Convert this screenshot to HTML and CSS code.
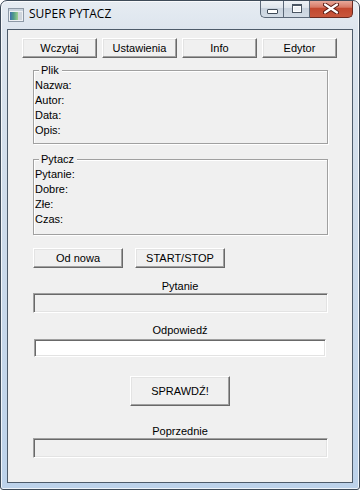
FILE: index.html
```html
<!DOCTYPE html>
<html lang="pl">
<head>
<meta charset="utf-8">
<title>SUPER PYTACZ</title>
<link rel="stylesheet" href="styles.css">
</head>
<body>
<div class="window">
  <div class="titlebar">
    <svg class="app-icon" viewBox="0 0 16 14" width="16" height="14">
      <defs>
        <linearGradient id="pane" x1="0" y1="0" x2="1" y2="0">
          <stop offset="0" stop-color="#3f6fae"/>
          <stop offset="0.45" stop-color="#4f9c8a"/>
          <stop offset="1" stop-color="#9fd08e"/>
        </linearGradient>
      </defs>
      <rect x="0.5" y="0.5" width="15" height="13" fill="#eef1f4" stroke="#8d99a6"/>
      <rect x="1" y="1" width="14" height="2" fill="#c9d3dd"/>
      <rect x="2" y="4" width="8" height="8" fill="url(#pane)"/>
      <rect x="10" y="4" width="4" height="8" fill="#cfd6dd"/>
    </svg>
    <span class="title">SUPER PYTACZ</span>
    <div class="controls">
      <div class="ctl min"><span class="min-glyph"></span></div>
      <div class="ctl max"><span class="max-glyph"></span></div>
      <div class="ctl close">
        <svg viewBox="0 0 16 11" width="16" height="11">
          <path d="M2 1.5 L14 9.5 M14 1.5 L2 9.5" stroke="#5a1c14" stroke-width="4.2" stroke-linecap="round"/>
          <path d="M2 1.5 L14 9.5 M14 1.5 L2 9.5" stroke="#ffffff" stroke-width="2.2" stroke-linecap="round"/>
        </svg>
      </div>
    </div>
  </div>
  <div class="client">
    <div class="toolbar">
      <button class="btn tb-btn">Wczytaj</button>
      <button class="btn tb-btn">Ustawienia</button>
      <button class="btn tb-btn">Info</button>
      <button class="btn tb-btn">Edytor</button>
    </div>

    <div class="group group-plik">
      <span class="legend">Plik</span>
      <div class="field">Nazwa:</div>
      <div class="field">Autor:</div>
      <div class="field">Data:</div>
      <div class="field">Opis:</div>
    </div>

    <div class="group group-pytacz">
      <span class="legend">Pytacz</span>
      <div class="field">Pytanie:</div>
      <div class="field">Dobre:</div>
      <div class="field">Złe:</div>
      <div class="field">Czas:</div>
    </div>

    <div class="actions">
      <button class="btn act-btn">Od nowa</button>
      <button class="btn act-btn">START/STOP</button>
    </div>

    <div class="caption cap-pytanie">Pytanie</div>
    <div class="textbox tb-readonly"></div>

    <div class="caption cap-odp">Odpowiedź</div>
    <div class="textbox tb-input"></div>

    <button class="btn check-btn">SPRAWDŹ!</button>

    <div class="caption cap-prev">Poprzednie</div>
    <div class="textbox tb-readonly"></div>
  </div>
</div>
</body>
</html>
```

FILE: styles.css
```css
* { box-sizing: border-box; }

html, body {
  margin: 0;
  padding: 0;
  background: #ffffff;
}

body {
  width: 360px;
  height: 490px;
  font-family: "Liberation Sans", Arial, sans-serif;
  font-size: 11px;
  color: #000;
}

.window {
  width: 360px;
  height: 490px;
  border: 1px solid #3e4b59;
  border-radius: 7px 7px 3px 3px;
  background: linear-gradient(180deg, #e6ecf2 0px, #dde5ee 28px, #cfdcea 200px, #bcd2ea 100%);
  box-shadow: inset 0 0 0 1px rgba(255, 255, 255, 0.75);
  display: flex;
  flex-direction: column;
  overflow: hidden;
}

.titlebar {
  height: 28px;
  flex: none;
  display: flex;
  align-items: flex-start;
}

.app-icon {
  flex: none;
  margin: 7px 0 0 7px;
}

.title {
  font-family: "Open Sans", "Liberation Sans", sans-serif;
  font-size: 12px;
  line-height: 16px;
  margin: 5px 0 0 5px;
  color: #000;
}

.controls {
  margin-left: auto;
  margin-right: 6px;
  margin-top: -1px;
  display: flex;
  height: 18px;
}

.ctl {
  height: 18px;
  border: 1px solid #5b6878;
  border-top: none;
  display: flex;
  justify-content: center;
}

.min {
  width: 23px;
  border-right: none;
  border-radius: 0 0 0 5px;
  align-items: flex-end;
  padding-bottom: 3px;
  background: linear-gradient(180deg, #f1f4f7 0%, #dee5ec 45%, #c9d3de 50%, #d3dce6 100%);
}

.max {
  width: 27px;
  align-items: center;
  background: linear-gradient(180deg, #f1f4f7 0%, #dee5ec 45%, #c9d3de 50%, #d3dce6 100%);
}

.close {
  width: 43px;
  align-items: center;
  border-color: #6b2a20;
  border-left: none;
  border-radius: 0 0 5px 0;
  background: linear-gradient(180deg, #eab0a3 0%, #d77a66 42%, #c2482f 50%, #c8573d 100%);
}

.min-glyph {
  width: 11px;
  height: 5px;
  border: 1px solid #3f4b58;
  border-radius: 1px;
  background: #ffffff;
}

.max-glyph {
  width: 10px;
  height: 9px;
  border: 1px solid #4a5663;
  border-top-width: 2px;
  background: #eef2f6;
  box-shadow: inset 0 0 0 1px #ffffff;
}

.client {
  flex: 1;
  margin: 0 6px 6px;
  border: 1px solid #4d5b6a;
  background: #f0f0f0;
  display: flex;
  flex-direction: column;
  align-items: flex-start;
}

.btn {
  font-family: "Liberation Sans", Arial, sans-serif;
  font-size: 11px;
  color: #000;
  background: #f0f0f0;
  border: 1px solid;
  border-color: #ffffff #696969 #696969 #ffffff;
  box-shadow: inset -1px -1px 0 #a0a0a0, inset 1px 1px 0 #e3e3e3;
  padding: 0;
  margin: 0;
  display: flex;
  align-items: center;
  justify-content: center;
}

.toolbar {
  display: flex;
  gap: 5px;
  margin: 8px 0 0 14px;
}

.tb-btn {
  width: 75px;
  height: 20px;
}

.group {
  position: relative;
  margin-left: 25px;
  width: 295px;
  border: 1px solid #a0a0a0;
  box-shadow: inset 1px 1px 0 #ffffff, 1px 1px 0 #ffffff;
  padding: 7px 1px 0;
}

.group-plik {
  margin-top: 12px;
  height: 74px;
}

.group-pytacz {
  margin-top: 15px;
  height: 76px;
}

.legend {
  position: absolute;
  top: -8px;
  left: 5px;
  padding: 0 3px 0 2px;
  line-height: 15px;
  background: #f0f0f0;
}

.field {
  line-height: 15px;
  height: 15px;
}

.actions {
  display: flex;
  gap: 12px;
  margin: 13px 0 0 25px;
}

.act-btn {
  width: 90px;
  height: 20px;
}

.caption {
  width: 100%;
  text-align: center;
  line-height: 14px;
  height: 14px;
}

.cap-pytanie { margin-top: 11px; }
.cap-odp { margin-top: 10px; }
.cap-prev { margin-top: 18px; }

.textbox {
  border: 1px solid;
  border-color: #a0a0a0 #ffffff #ffffff #a0a0a0;
  box-shadow: inset 1px 1px 0 #696969, inset -1px -1px 0 #e3e3e3;
}

.tb-readonly {
  margin-left: 25px;
  width: 295px;
  height: 20px;
  background: #f0f0f0;
}

.tb-input {
  margin: 2px 0 0 26px;
  width: 292px;
  height: 18px;
  background: #ffffff;
}

.check-btn {
  align-self: center;
  width: 100px;
  height: 30px;
  margin-top: 19px;
}
```
